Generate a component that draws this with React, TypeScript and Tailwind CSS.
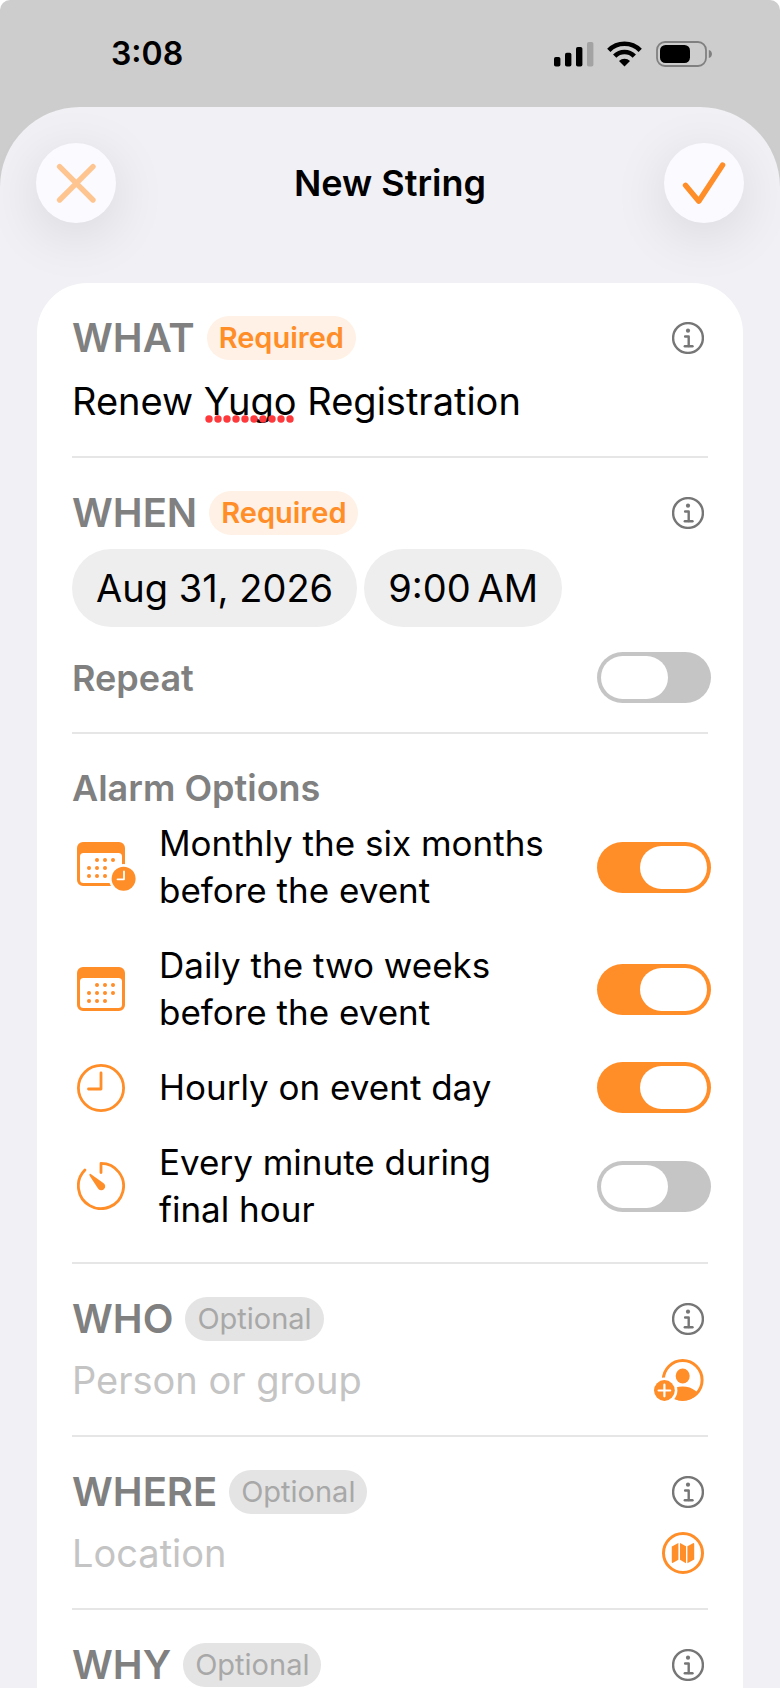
import { useState } from "react";
import type { ReactNode } from "react";

type AlarmOption = {
  id: string;
  lines: string[];
  icon: ReactNode;
  enabled: boolean;
};

const SignalIcon = () => (
  <svg width="40" height="26" viewBox="0 0 40 26" aria-hidden="true">
    <rect x="0" y="16" width="6.4" height="9.5" rx="1.8" />
    <rect x="11" y="11.7" width="6.4" height="13.8" rx="1.8" />
    <rect x="22" y="6" width="6.4" height="19.5" rx="1.8" />
    <rect x="33" y="1" width="6.4" height="24.5" rx="1.8" fill="#a3a3a3" />
  </svg>
);

const WifiIcon = () => (
  <svg width="35" height="26" viewBox="0 0 35 26" fill="none" stroke="#000" strokeWidth="4.6" aria-hidden="true">
    <path d="M1.8 9.3 A22 22 0 0 1 33.2 9.3" />
    <path d="M7.7 15.2 A13.6 13.6 0 0 1 27.3 15.2" />
    <path d="M17.5 25.4 L12 19.9 A8 8 0 0 1 23 19.9 Z" fill="#000" stroke="none" />
  </svg>
);

const BatteryIcon = () => (
  <svg width="57" height="26" viewBox="0 0 57 26" aria-hidden="true">
    <rect x="1" y="1" width="49" height="24" rx="8" fill="none" stroke="#808080" strokeWidth="1.8" />
    <rect x="4" y="4" width="30" height="18" rx="5.5" />
    <path d="M52.8 9 C57 10 57 16 52.8 17 Z" fill="#808080" />
  </svg>
);

const InfoIcon = () => (
  <svg width="32" height="32" viewBox="0 0 32 32" fill="none" stroke="#767676" strokeWidth="2.4" aria-hidden="true">
    <circle cx="16" cy="16" r="14.9" />
    <path d="M13.1 14.5 H16.7 V24" strokeLinecap="round" strokeLinejoin="round" />
    <path d="M12.8 24.3 H20.5" strokeLinecap="round" />
    <circle cx="16" cy="8.7" r="2.1" fill="#767676" stroke="none" />
  </svg>
);

const CalendarFrame = () => (
  <path
    fillRule="evenodd"
    d="M6 0 H42 A6 6 0 0 1 48 6 V38 A6 6 0 0 1 42 44 H6 A6 6 0 0 1 0 38 V6 A6 6 0 0 1 6 0 Z M6.5 11 A3.5 3.5 0 0 0 3 14.5 V37.5 A3.5 3.5 0 0 0 6.5 41 H41.5 A3.5 3.5 0 0 0 45 37.5 V14.5 A3.5 3.5 0 0 0 41.5 11 Z"
  />
);

const Dots = ({ points }: { points: number[][] }) => (
  <>
    {points.map(([x, y]) => (
      <circle key={`${x}-${y}`} cx={x} cy={y} r="2" />
    ))}
  </>
);

const CalendarIcon = () => (
  <svg width="60" height="44" viewBox="0 0 60 44" fill="#ff8d28" aria-hidden="true">
    <CalendarFrame />
    <Dots points={[[20, 18], [28, 18], [36, 18], [12, 26], [20, 26], [28, 26], [36, 26], [12, 34], [20, 34], [28, 34]]} />
  </svg>
);

const CalendarClockIcon = () => (
  <svg width="60" height="50" viewBox="0 0 60 50" fill="#ff8d28" aria-hidden="true">
    <CalendarFrame />
    <Dots points={[[20, 18], [28, 18], [36, 18], [12, 26], [20, 26], [28, 26], [12, 34], [20, 34], [28, 34]]} />
    <circle cx="46.6" cy="36.7" r="14.6" fill="#fff" />
    <circle cx="46.6" cy="36.7" r="12" />
    <path d="M47 29.5 V37.3 H40.5" fill="none" stroke="#fff" strokeWidth="1.8" strokeLinecap="round" strokeLinejoin="round" />
  </svg>
);

const ClockIcon = () => (
  <svg width="48" height="48" viewBox="0 0 48 48" fill="none" stroke="#ff8d28" strokeWidth="2.8" strokeLinecap="round" strokeLinejoin="round" aria-hidden="true">
    <circle cx="24" cy="24" r="22.6" />
    <path d="M24 9 V25 H11.5" />
  </svg>
);

const TimerIcon = () => (
  <svg width="48" height="48" viewBox="0 0 48 48" fill="none" stroke="#ff8d28" strokeWidth="2.8" strokeLinecap="round" strokeLinejoin="round" aria-hidden="true">
    <path d="M24 10.5 V1.4 A22.6 22.6 0 1 1 7.9 8.1" />
    <path d="M12.6 12 Q13.4 11.6 14.4 12.4 L26.3 21 A3.9 3.9 0 1 1 21 26.4 L12.8 14 Q12 12.8 12.6 12 Z" fill="#ff8d28" stroke="none" />
  </svg>
);

const AddPersonIcon = () => (
  <svg width="50" height="42" viewBox="0 0 50 42" fill="#ff8d28" aria-hidden="true">
    <clipPath id="person-circle">
      <circle cx="28.7" cy="21" r="20.5" />
    </clipPath>
    <circle cx="28.7" cy="21" r="19.4" fill="none" stroke="#ff8d28" strokeWidth="3" />
    <ellipse cx="28.7" cy="17" rx="7" ry="7.6" />
    <ellipse cx="28.7" cy="42" rx="18" ry="14.5" clipPath="url(#person-circle)" />
    <circle cx="10.4" cy="31.5" r="13" fill="#fff" />
    <circle cx="10.4" cy="31.5" r="10.4" />
    <path d="M10.4 25.7 V37.3 M4.6 31.5 H16.2" stroke="#fff" strokeWidth="2.2" strokeLinecap="round" />
  </svg>
);

const MapIcon = () => (
  <svg width="42" height="42" viewBox="0 0 42 42" fill="#ff8d28" aria-hidden="true">
    <circle cx="21" cy="21" r="19.5" fill="none" stroke="#ff8d28" strokeWidth="3" />
    <path d="M9.8 14.6 L16.4 11 V27.8 L11 30.8 Q9.8 31.2 9.8 30 Z" />
    <path d="M18 11 L24 14.2 V31.2 L18 27.8 Z" />
    <path d="M25.4 14.2 L31 11.2 Q32.2 10.8 32.2 12 V27.6 L25.4 31.2 Z" />
  </svg>
);

const Badge = ({ required }: { required?: boolean }) =>
  required ? (
    <span className="flex h-11 items-center rounded-full bg-[#fff1e5] px-3 text-[29px] font-semibold text-[#ff8d28]">
      Required
    </span>
  ) : (
    <span className="flex h-11 items-center rounded-full bg-[#e4e4e4] px-3 text-[29px] text-[#a8a8a8]">
      Optional
    </span>
  );

const SectionHeader = ({ title, required }: { title: string; required?: boolean }) => (
  <div className="flex h-11 items-center gap-3">
    <h2 className="text-[40px] font-semibold text-[#808080]">{title}</h2>
    <Badge required={required} />
    <button type="button" aria-label={`About ${title}`} className="mr-1 ml-auto">
      <InfoIcon />
    </button>
  </div>
);

const Toggle = ({ id, checked, onChange }: { id: string; checked: boolean; onChange: () => void }) => (
  <input
    id={id}
    type="checkbox"
    role="switch"
    checked={checked}
    onChange={onChange}
    className="-my-0.5 -mr-[3px] ml-auto h-[51px] w-[114px] shrink-0 appearance-none rounded-full bg-[#c5c5c5] p-1 before:block before:h-[43px] before:w-[67px] before:rounded-full before:bg-white checked:bg-[#ff8d28] checked:before:ml-[39px]"
  />
);

const initialOptions: AlarmOption[] = [
  { id: "monthly", lines: ["Monthly the six months", "before the event"], icon: <CalendarClockIcon />, enabled: true },
  { id: "daily", lines: ["Daily the two weeks", "before the event"], icon: <CalendarIcon />, enabled: true },
  { id: "hourly", lines: ["Hourly on event day"], icon: <ClockIcon />, enabled: true },
  { id: "minute", lines: ["Every minute during", "final hour"], icon: <TimerIcon />, enabled: false },
];

export default function App() {
  const [what, setWhat] = useState("Renew Yugo Registration");
  const [who, setWho] = useState("");
  const [where, setWhere] = useState("");
  const [repeat, setRepeat] = useState(false);
  const [options, setOptions] = useState(initialOptions);

  const toggleOption = (id: string) => {
    setOptions(options.map((o) => (o.id === id ? { ...o, enabled: !o.enabled } : o)));
  };

  return (
    <div className="flex h-screen flex-col overflow-hidden rounded-t-[10px] bg-[#cdcdcd] font-['Inter',sans-serif] text-black">
      <header className="flex h-[107px] shrink-0 items-center justify-between pr-[67px] pl-[111px]">
        <span className="text-[32px] font-semibold">3:08</span>
        <div className="flex items-center">
          <SignalIcon />
          <span className="w-[13px]" />
          <WifiIcon />
          <span className="w-[14px]" />
          <BatteryIcon />
        </div>
      </header>

      <main className="flex min-h-0 flex-1 flex-col rounded-t-[80px] bg-[#f0f0f5]">
        <div className="flex shrink-0 items-center justify-between px-9 pt-9 pb-[60px]">
          <button
            type="button"
            aria-label="Close"
            className="size-20 rounded-full bg-[#fafaff] shadow-[0_12px_56px_rgba(0,0,0,0.11)]"
          >
            <svg width="80" height="80" viewBox="0 0 80 80" fill="none" stroke="#ffc590" strokeWidth="5.4" strokeLinecap="round">
              <path d="M23.6 23.6 L57 57 M57 23.6 L23.6 57" />
            </svg>
          </button>
          <h1 className="text-[36px] font-semibold">New String</h1>
          <button
            type="button"
            aria-label="Save"
            className="size-20 rounded-full bg-[#fafaff] shadow-[0_12px_56px_rgba(0,0,0,0.11)]"
          >
            <svg width="80" height="80" viewBox="0 0 80 80" fill="none" stroke="#ff8d28" strokeWidth="5.4" strokeLinecap="round" strokeLinejoin="round">
              <path d="M21.5 42.3 L34.8 58.2 L58.6 22" />
            </svg>
          </button>
        </div>

        <form className="mx-[37px] min-h-0 flex-1 overflow-y-auto rounded-t-[50px] bg-white px-[35px] [scrollbar-width:none]">
          <section className="border-b-2 border-[#e6e6e6] pt-[33px] pb-[31px]">
            <SectionHeader title="WHAT" required />
            <div className="relative mt-[17px] h-12">
              <input
                type="text"
                aria-label="What"
                value={what}
                onChange={(e) => setWhat(e.target.value)}
                spellCheck={false}
                className="h-12 w-full text-[38px] outline-none"
              />
              {/* spelling mark under "Yugo" */}
              <svg className="absolute top-[38px] left-[133px]" width="92" height="8" viewBox="0 0 92 8" fill="#ff383c" aria-hidden="true">
                {[4, 13, 22, 31, 40, 49, 58, 67, 76, 85].map((x) => (
                  <circle key={x} cx={x} cy="4" r="3.7" />
                ))}
              </svg>
            </div>
          </section>

          <section className="border-b-2 border-[#e6e6e6] pt-[33px] pb-[31px]">
            <SectionHeader title="WHEN" required />
            <div className="mt-3.5 flex gap-[7px]">
              <button type="button" className="h-[78px] rounded-full bg-[#eeeeee] px-6 text-[38px]">
                Aug 31, 2026
              </button>
              <button type="button" className="h-[78px] rounded-full bg-[#eeeeee] px-6 text-[38px]">
                9:00{"\u202f"}AM
              </button>
            </div>
            <div className="mt-[27px] flex h-[47px] items-center">
              <label htmlFor="repeat" className="text-[36px] font-semibold text-[#808080]">
                Repeat
              </label>
              <Toggle id="repeat" checked={repeat} onChange={() => setRepeat(!repeat)} />
            </div>
          </section>

          <section className="border-b-2 border-[#e6e6e6] pt-[30px] pb-[29px]">
            <h2 className="text-[36px] leading-12 font-semibold text-[#808080]">Alarm Options</h2>
            <div className="mt-2 flex flex-col gap-7">
              {options.map((option) => (
                <div key={option.id} className="flex items-center pl-[5px]">
                  <span className="-my-1 w-[82px] shrink-0">{option.icon}</span>
                  <label htmlFor={option.id} className="text-[35px] leading-[47px]">
                    {option.lines.map((line) => (
                      <span key={line} className="block">
                        {line}
                      </span>
                    ))}
                  </label>
                  <Toggle id={option.id} checked={option.enabled} onChange={() => toggleOption(option.id)} />
                </div>
              ))}
            </div>
          </section>

          <section className="border-b-2 border-[#e6e6e6] pt-[33px] pb-[31px]">
            <SectionHeader title="WHO" />
            <div className="mt-[15px] flex h-12 items-center">
              <input
                type="text"
                aria-label="Who"
                placeholder="Person or group"
                value={who}
                onChange={(e) => setWho(e.target.value)}
                className="h-12 min-w-0 flex-1 text-[38px] outline-none placeholder:text-[#c4c4c4]"
              />
              <button type="button" aria-label="Add person" className="mr-1">
                <AddPersonIcon />
              </button>
            </div>
          </section>

          <section className="border-b-2 border-[#e6e6e6] pt-[33px] pb-[31px]">
            <SectionHeader title="WHERE" />
            <div className="mt-[15px] flex h-12 items-center">
              <input
                type="text"
                aria-label="Where"
                placeholder="Location"
                value={where}
                onChange={(e) => setWhere(e.target.value)}
                className="h-12 min-w-0 flex-1 text-[38px] outline-none placeholder:text-[#c4c4c4]"
              />
              <button type="button" aria-label="Choose on map" className="mr-1">
                <MapIcon />
              </button>
            </div>
          </section>

          <section className="pt-[33px] pb-[31px]">
            <SectionHeader title="WHY" />
          </section>
        </form>
      </main>
    </div>
  );
}
